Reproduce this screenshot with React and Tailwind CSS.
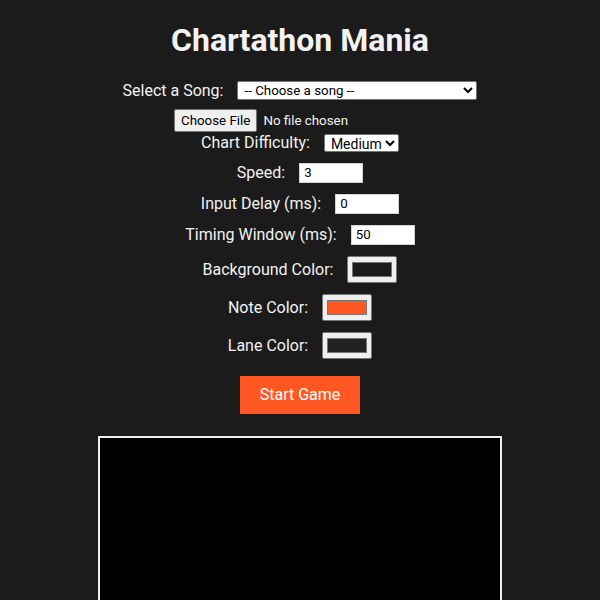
import React, { useState } from 'react';

const fieldRow = "my-[10px] flex items-center justify-center h-[21px]";
const colorRow = "my-[10px] flex items-center justify-center h-[28px]";
const label = "mr-[14px]";
const textInput = "bg-white text-black text-[13.33px] px-[4px] border border-[#d4d4d4] h-[20px] w-[64px]";
const colorInput = "w-[50px] h-[27px] bg-[#efefef] border border-[#767676] rounded-[2px] px-[2px] py-[1px] cursor-pointer";

const App = () => {
  const [speed, setSpeed] = useState(3);
  const [delay, setDelay] = useState(0);
  const [windowMs, setWindowMs] = useState(50);
  const [bgColor, setBgColor] = useState('#1b1b1b');
  const [noteColor, setNoteColor] = useState('#ff5722');
  const [laneColor, setLaneColor] = useState('#222222');

  return (
    <div className="min-h-[600px] bg-[#1b1b1b] text-[#f2f2f2] text-center font-['Roboto',sans-serif] text-[16px] leading-[19px] pt-[21px]">
      {/* Title */}
      <h1 className="text-[32px] font-bold leading-[38px] mb-[21px]">Chartathon Mania</h1>

      {/* Song picker */}
      <div className="flex items-center justify-center h-[20px]">
        <label className={label}>Select a Song:</label>
        <select className="bg-white text-black text-[13.33px] w-[240px] h-[19px] pl-[2px] rounded-[2px] border border-[#767676]">
          <option>-- Choose a song --</option>
        </select>
      </div>
      <div className="mt-[10px] flex justify-center h-[21px] items-center">
        <input
          type="file"
          className="w-[252px] text-[13.33px] text-left file:bg-[#efefef] file:text-black file:border file:border-[#767676] file:rounded-[2px] file:px-[6px] file:py-[1px] file:mr-[6px] file:text-[13.33px]"
        />
      </div>

      {/* Difficulty */}
      <div className="flex items-end justify-center h-[21px] mb-[10px]">
        <label className={label}>Chart Difficulty:</label>
        <select className="bg-white text-black text-[14px] h-[18px] pl-[2px] rounded-[2px] border border-[#767676]" defaultValue="medium">
          <option value="easy">Easy</option>
          <option value="medium">Medium</option>
          <option value="hard">Hard</option>
        </select>
      </div>

      {/* Numbers */}
      <div className={fieldRow}>
        <label className={label}>Speed:</label>
        <input type="number" value={speed} onChange={(e) => setSpeed(e.target.value)} className={textInput} />
      </div>
      <div className={fieldRow}>
        <label className={label}>Input Delay (ms):</label>
        <input type="number" value={delay} onChange={(e) => setDelay(e.target.value)} className={textInput} />
      </div>
      <div className={fieldRow}>
        <label className={label}>Timing Window (ms):</label>
        <input type="number" value={windowMs} onChange={(e) => setWindowMs(e.target.value)} className={textInput} />
      </div>

      {/* Colors */}
      <div className={colorRow}>
        <label className={label}>Background Color:</label>
        <input type="color" value={bgColor} onChange={(e) => setBgColor(e.target.value)} className={colorInput} />
      </div>
      <div className={colorRow}>
        <label className={label}>Note Color:</label>
        <input type="color" value={noteColor} onChange={(e) => setNoteColor(e.target.value)} className={colorInput} />
      </div>
      <div className={colorRow}>
        <label className={label}>Lane Color:</label>
        <input type="color" value={laneColor} onChange={(e) => setLaneColor(e.target.value)} className={colorInput} />
      </div>

      <div className="flex justify-center mt-[17px]">
        <button className="bg-[#ff5722] text-white px-[20px] py-[10px] leading-[18px] cursor-pointer">
          Start Game
        </button>
      </div>

      {/* Game canvas */}
      <div className="flex justify-center mt-[22px]">
        <canvas width="400" height="600" className="bg-black border-2 border-[#eeeeee] block" />
      </div>
    </div>
  );
};

export default App;
